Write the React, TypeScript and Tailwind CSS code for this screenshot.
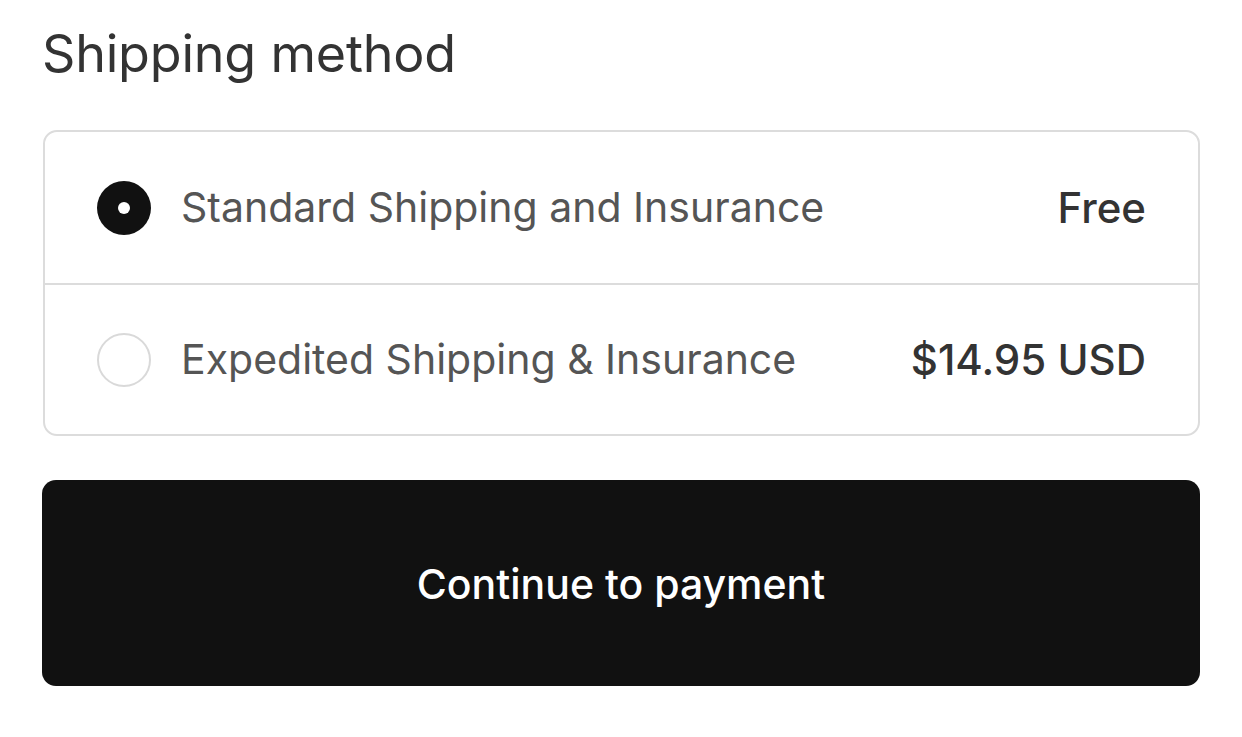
import React, { useState } from "react";

type Option = { id: string; label: string; price: string };

const options: Option[] = [
  { id: "standard", label: "Standard Shipping and Insurance", price: "Free" },
  { id: "expedited", label: "Expedited Shipping & Insurance", price: "$14.95 USD" },
];

const App: React.FC = () => {
  const [selected, setSelected] = useState("standard");

  return (
    <div
      className="min-h-screen w-[1242px] bg-white px-[42px] pt-[22px]"
      style={{ fontFamily: "Inter, 'Noto Sans', sans-serif" }}
    >
      {/* Heading */}
      <h1 className="text-[52px] leading-[64px] text-[#333333] tracking-[-0.2px]">Shipping method</h1>

      {/* Options */}
      <div className="mt-[44px] ml-px rounded-[14px] border-2 border-[#dcdcdc]">
        {options.map((opt, i) => {
          const active = selected === opt.id;
          return (
            <button
              key={opt.id}
              onClick={() => setSelected(opt.id)}
              className={`flex h-[151px] w-full items-center pl-[52px] pr-[52px] text-left ${
                i > 0 ? "border-t-2 border-[#dcdcdc]" : ""
              }`}
            >
              {active ? (
                <span className="flex h-[54px] w-[54px] shrink-0 items-center justify-center rounded-full bg-[#111111]">
                  <span className="h-[12px] w-[12px] rounded-full bg-white" />
                </span>
              ) : (
                <span className="h-[54px] w-[54px] shrink-0 rounded-full border-2 border-[#d9d9d9]" />
              )}
              <span className="ml-[30px] flex-1 text-[41px] text-[#555555]">{opt.label}</span>
              <span className="text-[42px] font-medium text-[#333333]">{opt.price}</span>
            </button>
          );
        })}
      </div>

      {/* CTA */}
      <button className="mt-[44px] flex h-[206px] w-[1158px] items-center justify-center rounded-[14px] bg-[#111111] pt-[4px] text-[41px] font-medium text-white">
        Continue to payment
      </button>
    </div>
  );
};

export default App;
